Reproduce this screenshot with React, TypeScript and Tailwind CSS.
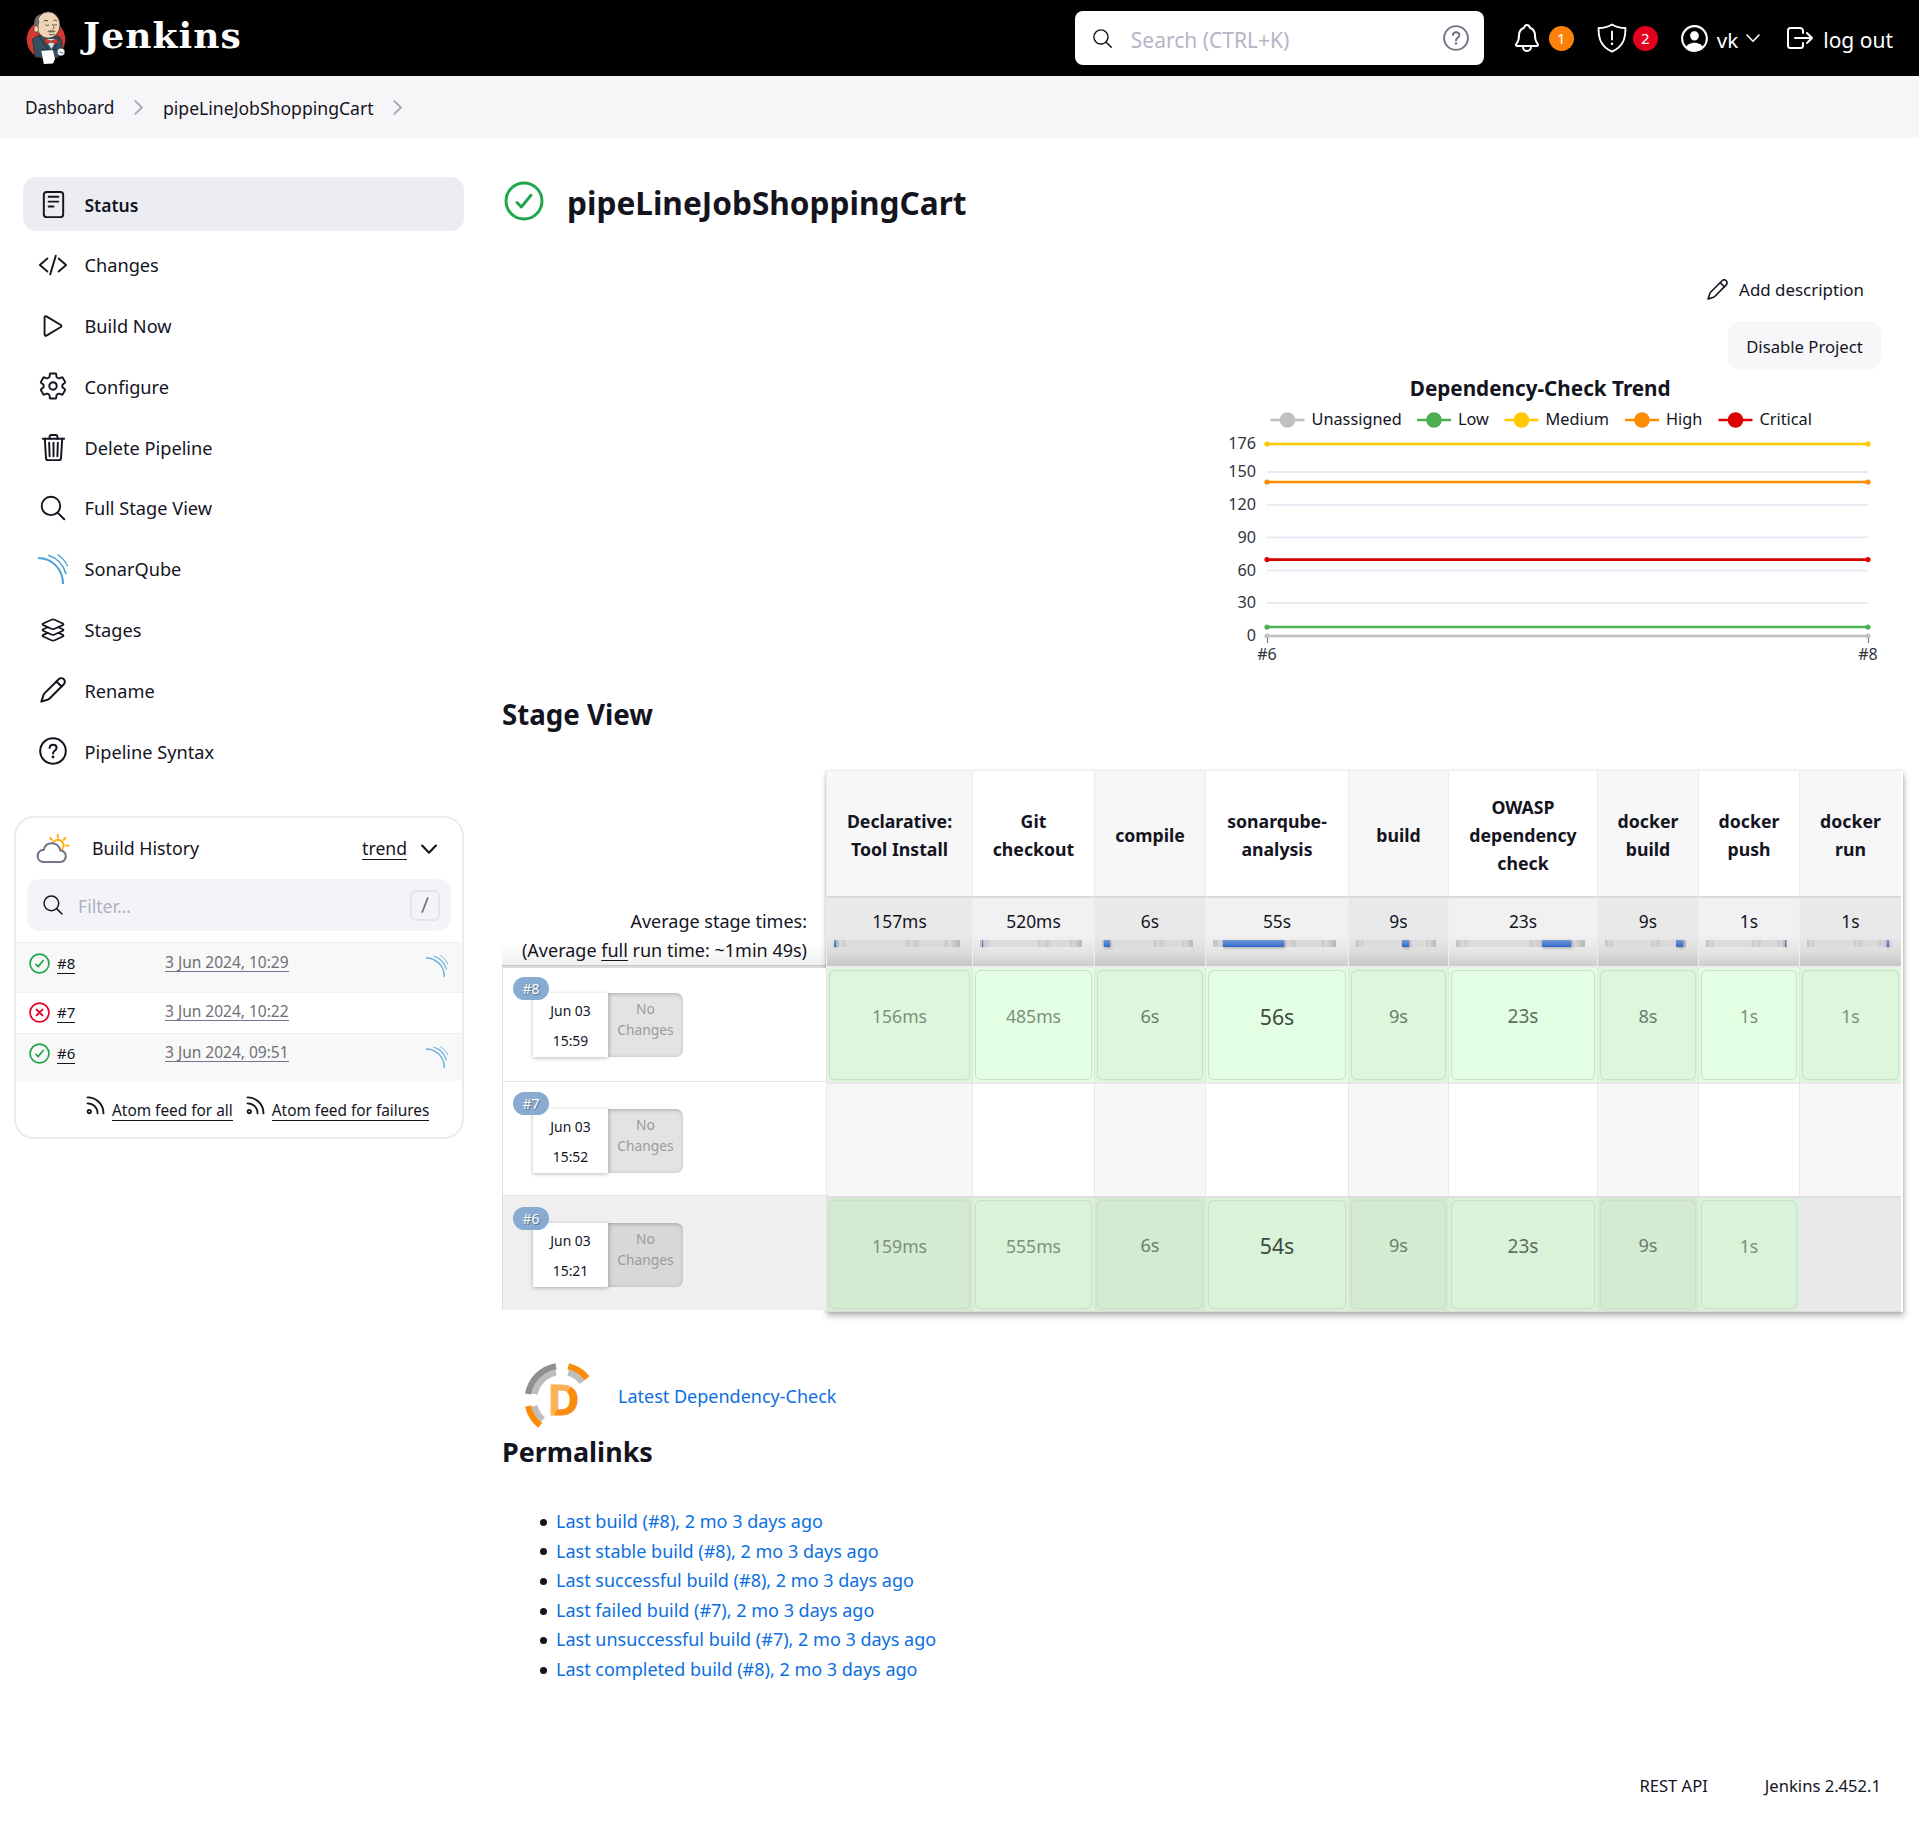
import React from "react";
import {
  IoReaderOutline,
  IoCodeSlashOutline,
  IoPlayOutline,
  IoSettingsOutline,
  IoTrashOutline,
  IoSearchOutline,
  IoLayersOutline,
  IoNotificationsOutline,
  IoPersonCircleOutline,
  IoLogOutOutline,
} from "react-icons/io5";

/* ---------- icons ---------- */

function Butler() {
  return (
    <svg width="40" height="54" viewBox="0 0 40 54" className="shrink-0">
      <circle cx="20" cy="28.5" r="19.3" fill="#d33833" />
      <path d="M6.5 28 L13 24.5 L32 25 L35.5 29 L37 42 L31 47 L9 46 Z" fill="#335061" stroke="#1d2f3a" strokeWidth="0.8" />
      <path d="M19 28 L25.5 38 L31 28 Z" fill="#d5dde3" />
      <path d="M13 25 L23 40 M33 26 L28 40" stroke="#1d2f3a" strokeWidth="0.9" fill="none" />
      <ellipse cx="22.2" cy="14" rx="11.8" ry="13.2" fill="#efd4b7" stroke="#3a2c22" strokeWidth="0.8" />
      <path d="M16 2.4 C10 4 7.8 8 8 15 L12 19 C13 16 12 13 13.5 11 C12 8 13 4.5 16 2.4 Z" fill="#6d6b6d" />
      <ellipse cx="10.2" cy="18" rx="2.3" ry="3.2" fill="#efd4b7" stroke="#3a2c22" strokeWidth="0.6" />
      <path d="M17.5 10.5 C19 9 21 9 22 10.3 M27.5 9.5 C28.5 8.8 30 9 31 10.3" stroke="#3a2c22" strokeWidth="0.9" fill="none" />
      <path d="M19.5 13.8 C21 14.8 22 14.6 23 13.6 M28 13.4 C29 14.3 30.2 14.2 31 13.2" stroke="#3a2c22" strokeWidth="0.8" fill="none" />
      <path d="M26.5 13 C27.5 15.5 29 17 26.8 18" stroke="#3a2c22" strokeWidth="0.8" fill="none" />
      <path d="M21 20.5 C24 18.6 28 18.8 30 20.4 C27 21.6 24 22 21 20.5 Z" fill="#7b6b60" />
      <path d="M23 23.2 C25 24 27 24 28.5 23" stroke="#3a2c22" strokeWidth="0.8" fill="none" />
      <path d="M18.5 27.5 L25 30 L31.5 27.5 L31.8 33 L25 31.2 L19.2 33.2 Z" fill="#d33833" stroke="#7b1d1a" strokeWidth="0.5" />
      <circle cx="35" cy="41" r="3.8" fill="#ffffff" stroke="#1d2f3a" strokeWidth="0.5" />
      <path d="M33 41.5 h4 M34 39.5 l2.5 3.5" stroke="#55626b" strokeWidth="0.6" />
      <path d="M15.3 39.5 L26.8 38.8 L29 48 L27 52.6 L17.8 53 Z" fill="#ffffff" />
      <path d="M15 39.2 L31 38.4" stroke="#1d2f3a" strokeWidth="0.9" />
    </svg>
  );
}

function Pencil({ size }: { size: number }) {
  return (
    <svg width={size} height={size} viewBox="0 0 25 25" fill="none" stroke="currentColor" strokeWidth="1.9" strokeLinejoin="round" strokeLinecap="round">
      <path d="M1.3 23.7 L3.4 17.2 C3.7 16.5 4 16 4.5 15.5 L18 2.1 a3.4 3.4 0 0 1 4.9 4.9 L9.5 20.5 C9 21 8.5 21.3 7.8 21.6 Z" />
      <path d="M15.8 4.3 L20.7 9.2" />
    </svg>
  );
}

function HelpCircle({ size, stroke }: { size: number; stroke: number }) {
  return (
    <svg width={size} height={size} viewBox="0 0 28 28" fill="none" stroke="currentColor" strokeWidth={stroke} strokeLinecap="round" strokeLinejoin="round">
      <circle cx="14" cy="14" r="12.8" />
      <path d="M10.6 10.8 C10.8 8.8 12.2 7.8 14.1 7.8 C16.2 7.8 17.6 9 17.6 10.8 C17.6 12.3 16.8 13 15.7 13.8 C14.6 14.6 14 15.1 14 16.6" />
      <circle cx="14" cy="20" r="1.4" fill="currentColor" stroke="none" />
    </svg>
  );
}

function Sonar({ size, faded }: { size: number; faded?: boolean }) {
  return (
    <svg width={size} height={size} viewBox="0 0 30 30" fill="none" stroke="#4b9fd5" className={faded ? "opacity-80" : ""}>
      <path d="M0 4 C14 4 25 15 25 30" strokeWidth="2" />
      <path d="M10.2 1.3 C19 4 25.5 11 28 20" strokeWidth="1.6" />
      <path d="M19.5 0.5 C24 3.5 27.5 7.5 29.7 12.3" strokeWidth="1.3" />
    </svg>
  );
}

function Shield() {
  return (
    <svg width="30" height="30" viewBox="0 0 30 30" fill="none" stroke="currentColor" strokeWidth="1.9" strokeLinecap="round" strokeLinejoin="round">
      <path d="M15 1.5 C11.5 3.8 6.5 5 1.6 5 C1.4 15.5 3.8 23.5 15 28.6 C26.2 23.5 28.6 15.5 28.4 5 C23.5 5 18.5 3.8 15 1.5 Z" />
      <path d="M15 8.5 V16.5" />
      <circle cx="15" cy="20.8" r="1.3" fill="currentColor" stroke="none" />
    </svg>
  );
}

function Chevron({ dir, className, size = 14, stroke = 1.8 }: { dir: "right" | "down"; className?: string; size?: number; stroke?: number }) {
  return (
    <svg width={size} height={size} viewBox="0 0 14 14" fill="none" stroke="currentColor" strokeWidth={stroke} strokeLinecap="round" strokeLinejoin="round" className={className}>
      {dir === "right" ? <path d="M4 1 L10.2 7 L4 13" /> : <path d="M1 4 L7 10.2 L13 4" />}
    </svg>
  );
}

function StatusMark({ ok, size, stroke }: { ok: boolean; size: number; stroke: number }) {
  return (
    <svg width={size} height={size} viewBox="0 0 40 40" fill="none" stroke={ok ? "#1ea64b" : "#e6001f"} strokeWidth={stroke} strokeLinecap="round" strokeLinejoin="round" className="shrink-0">
      <circle cx="20" cy="20" r="18" />
      {ok ? <path d="M13 21.5 L17.3 26 L27 14.3" /> : <path d="M14.5 14.5 L25.5 25.5 M25.5 14.5 L14.5 25.5" strokeWidth={stroke * 1.2} />}
    </svg>
  );
}

function PartlySunny() {
  return (
    <svg width="34" height="30" viewBox="0 0 34 30" fill="none" strokeWidth="2.1" strokeLinecap="round" strokeLinejoin="round">
      <g stroke="#ffb21b">
        <path d="M17 8.3 A5.8 5.8 0 1 1 26.5 15" />
        <path d="M21.8 1 V3.4 M14.2 4 L15.8 5.7 M29.4 4 L27.7 5.7 M29.9 11.5 H32.4" />
      </g>
      <path d="M6.6 28 H23.6 A5.8 5.8 0 0 0 24.4 16.4 C23.2 11.8 19.5 9.2 15.6 9.2 C11.4 9.2 8.6 12 7.6 15.9 A6.1 6.1 0 0 0 6.6 28 Z" stroke="#73738c" />
    </svg>
  );
}

function Rss() {
  return (
    <svg width="19" height="19" viewBox="0 0 19 19" fill="none" stroke="currentColor" strokeWidth="1.8" strokeLinecap="round">
      <circle cx="3.3" cy="15.6" r="1.7" />
      <path d="M1.5 7.3 C7.2 7.3 11.6 11.6 11.6 17.4" />
      <path d="M1.5 1.4 C10.5 1.4 17.5 8.3 17.5 17.4" />
    </svg>
  );
}

function DependencyLogo() {
  return (
    <svg width="66" height="66" viewBox="0 0 66 66" fill="none" className="shrink-0">
      <defs>
        <linearGradient id="d" x1="0" y1="0" x2="1" y2="1">
          <stop offset="0.5" stopColor="#fab157" />
          <stop offset="0.5" stopColor="#f98c0d" />
        </linearGradient>
      </defs>
      <path d="M3.2 31 A34 34 0 0 1 31 3.3" stroke="#8f8f90" strokeWidth="6.4" />
      <path d="M9.5 31 A28 28 0 0 1 31 9.5" stroke="#bdbdbd" strokeWidth="6.2" />
      <path d="M43.3 3.4 A34 34 0 0 1 62 15.2" stroke="#f98c0d" strokeWidth="6.4" />
      <path d="M43.3 9.7 A28 28 0 0 1 57.2 19.2" stroke="#bdbdbd" strokeWidth="6" />
      <path d="M3.2 43 A34 34 0 0 0 15.2 62.3" stroke="#f98c0d" strokeWidth="6.4" />
      <path d="M9.5 43 A28 28 0 0 0 18 56.6" stroke="#bdbdbd" strokeWidth="6" />
      <text x="22.5" y="52" fontSize="41" fontWeight="700" textLength="32" lengthAdjust="spacingAndGlyphs" fill="url(#d)" stroke="url(#d)" strokeWidth="0.8" className="font-['Noto_Sans']">D</text>
    </svg>
  );
}

/* ---------- header ---------- */

function Header() {
  return (
    <header className="flex h-[76px] items-center bg-black pr-[26px] pl-[26px] text-white">
      <Butler />
      <span className="ml-[17px] pb-[6px] font-['DejaVu_Serif',serif] text-[36px] leading-[44px] font-bold tracking-[1.1px]">Jenkins</span>
      <div className="ml-auto flex h-[54px] w-[409px] items-center rounded-[8px] bg-white pr-[15px] pl-[16px]">
        <IoSearchOutline size={23} className="text-[#14141f]" />
        <span className="ml-[17px] flex-1 pt-[3px] text-[21px] leading-[28px] text-[#b5b5c8]">Search (CTRL+K)</span>
        <span className="text-[#73738c]">
          <HelpCircle size={26} stroke={2.1} />
        </span>
      </div>
      <div className="ml-[27px] flex items-center">
        <IoNotificationsOutline size={32} />
        <span className="ml-[6px] flex h-[25px] w-[25px] items-center justify-center rounded-full bg-[#fe820a] pt-px text-[15px]">1</span>
        <span className="ml-[23px]"><Shield /></span>
        <span className="ml-[6px] flex h-[25px] w-[25px] items-center justify-center rounded-full bg-[#e6001f] pt-px text-[15px]">2</span>
        <IoPersonCircleOutline size={33} className="ml-[20px]" />
        <span className="ml-[6px] pt-[4px] text-[20.6px] leading-[28px]">vk</span>
        <Chevron dir="down" size={14} stroke={1.6} className="ml-[8px]" />
        <IoLogOutOutline size={32} className="ml-[24px]" />
        <span className="ml-[7px] pt-[4px] text-[21px] leading-[28px]">log out</span>
      </div>
    </header>
  );
}

/* ---------- sidebar ---------- */

const NAV: { label: string; icon: React.ReactNode; active?: boolean }[] = [
  { label: "Status", icon: <IoReaderOutline size={31} className="stroke-[18px]" />, active: true },
  { label: "Changes", icon: <IoCodeSlashOutline size={30} /> },
  { label: "Build Now", icon: <IoPlayOutline size={30} /> },
  { label: "Configure", icon: <IoSettingsOutline size={30} /> },
  { label: "Delete Pipeline", icon: <IoTrashOutline size={31} /> },
  { label: "Full Stage View", icon: <IoSearchOutline size={30} /> },
  { label: "SonarQube", icon: <Sonar size={30} /> },
  { label: "Stages", icon: <IoLayersOutline size={28} /> },
  { label: "Rename", icon: <Pencil size={26} /> },
  { label: "Pipeline Syntax", icon: <HelpCircle size={28} stroke={2} /> },
];

function BuildRow({ id, date, ok, sonar, className, inner }: { id: string; date: string; ok: boolean; sonar: boolean; className: string; inner: string }) {
  return (
    <div className={"flex items-start border-t border-[#f0f0f0] pl-[13px] " + className}>
      <div className={"flex items-center " + inner}>
        <span className="pt-[2px]"><StatusMark ok={ok} size={21} stroke={3.2} /></span>
        <span className="ml-[7px] w-[108px] text-[15px] leading-[22px]">
          <a className="border-b border-[#14141f] pb-0">{id}</a>
        </span>
        <a className="border-b border-[#73738c] text-[15.5px] leading-[18px] text-[#6f6f75]">{date}</a>
      </div>
      {sonar && (
        <span className="mt-[12px] mr-[14px] ml-auto">
          <Sonar size={22} faded />
        </span>
      )}
    </div>
  );
}

function Sidebar() {
  return (
    <aside className="w-[502px] shrink-0 pt-[38px]">
      <nav className="ml-[23px] flex w-[441px] flex-col gap-[6.8px]">
        {NAV.map((n) => (
          <a key={n.label} className={"flex h-[54px] items-center rounded-[13px] pl-[14px] " + (n.active ? "bg-[#ecedf3] font-semibold" : "")}>
            <span className="flex w-[32px] justify-center">{n.icon}</span>
            <span className={"ml-[15.5px] pt-[1px] leading-[24px] " + (n.active ? "text-[17.5px]" : "text-[18.2px]")}>{n.label}</span>
          </a>
        ))}
      </nav>

      <section className="mt-[38px] ml-[14px] h-[323px] w-[450px] overflow-hidden rounded-[20px] border-2 border-[#ebebf3]">
        <div className="flex h-[61px] items-center pr-[25px] pl-[20px]">
          <PartlySunny />
          <span className="ml-[22px] pb-px text-[17.8px] leading-[24px]">Build History</span>
          <a className="ml-auto border-b border-[#14141f] text-[17.6px] leading-[21px]">trend</a>
          <Chevron dir="down" size={16} stroke={1.9} className="ml-[14px]" />
        </div>
        <div className="mx-[11px] flex h-[52px] items-center rounded-[13px] bg-[#f3f3f8] pr-[11px] pl-[14px]">
          <IoSearchOutline size={24} />
          <span className="ml-[13px] flex-1 pt-[3px] text-[17.6px] text-[#b0b0c2]">Filter...</span>
          <span className="flex h-[31px] w-[30px] items-center justify-center rounded-[6px] border-2 border-[#e4e4ee]">
            <svg width="8" height="16" viewBox="0 0 8 16" stroke="#73738c" strokeWidth="1.8" strokeLinecap="round">
              <path d="M6.7 1 L1.3 15" />
            </svg>
          </span>
        </div>
        <div className="mt-[11px]">
          <BuildRow id="#8" date="3 Jun 2024, 10:29" ok sonar className="h-[50px] bg-[#f8f8f8]" inner="h-[39px]" />
          <BuildRow id="#7" date="3 Jun 2024, 10:22" ok={false} sonar={false} className="h-[41px]" inner="h-[37px]" />
          <BuildRow id="#6" date="3 Jun 2024, 09:51" ok sonar className="h-[48px] bg-[#f8f8f8]" inner="h-[37px]" />
        </div>
        <div className="flex h-[56px] items-center pt-[4px] pl-[70px] text-[15.4px]">
          <span className="pb-[11px]"><Rss /></span>
          <a className="ml-[7px] border-b border-[#14141f] leading-[18px]">Atom feed for all</a>
          <span className="ml-[13px] pb-[11px]"><Rss /></span>
          <a className="ml-[7px] border-b border-[#14141f] leading-[18px]">Atom feed for failures</a>
        </div>
      </section>
    </aside>
  );
}

/* ---------- trend chart ---------- */

const AXIS: [string, number][] = [["176", 69], ["150", 97], ["120", 130], ["90", 162.5], ["60", 195.5], ["30", 228], ["0", 261]];
const LEGEND: [string, number, string][] = [
  ["Unassigned", 70.5, "#c0c0c0"],
  ["Low", 217, "#4caf50"],
  ["Medium", 304.5, "#ffc800"],
  ["High", 425, "#ff8c00"],
  ["Critical", 518.5, "#dc0000"],
];
const SERIES: [number, string][] = [[261, "#c0c0c0"], [252, "#4caf50"], [69, "#ffc800"], [107, "#ff8c00"], [184.6, "#dc0000"]];

function TrendChart() {
  return (
    <svg width="700" height="300" viewBox="0 0 700 300" className="mt-[5px] mr-[19px] self-end font-['Noto_Sans'] text-[16px]">
      <text x="340.2" y="21" textAnchor="middle" fontSize="20.7" fontWeight="700" fill="#14141f">Dependency-Check Trend</text>
      {LEGEND.map(([label, x, color]) => (
        <g key={label}>
          <path d={`M${x} 45 h34`} stroke={color} strokeWidth="2.5" />
          <circle cx={x + 17} cy="45" r="7.8" fill={color} />
          <text x={x + 41} y="50" fontSize="16.3" fill="#14141f">{label}</text>
        </g>
      ))}
      {AXIS.map(([label, y]) => (
        <g key={label}>
          <path d={`M67 ${y} H668`} stroke="#e6ebf4" strokeWidth="1.8" />
          <text x="56" y={y + 5} textAnchor="end" fontSize="16.2" fill="#33333d">{label}</text>
        </g>
      ))}
      <path d="M67.5 261 v7 M668.5 261 v7" stroke="#6e7079" strokeWidth="1" />
      {SERIES.map(([y, color]) => (
        <g key={color} stroke={color} fill={color}>
          <path d={`M67 ${y} H668`} strokeWidth="2.6" />
          <circle cx="67" cy={y} r="2.6" stroke="none" />
          <circle cx="668" cy={y} r="2.6" stroke="none" />
        </g>
      ))}
      <text x="67" y="285" textAnchor="middle" fill="#33333d">#6</text>
      <text x="668" y="285" textAnchor="middle" fill="#33333d">#8</text>
    </svg>
  );
}

/* ---------- stage view ---------- */

type Stage = { lines: string[]; avg: string; start: number; width: number; r8: string; r6: string; size: string };

const SMALL = "text-[17.6px] text-[#7e8f7e]";
const MID = "text-[18.2px] text-[#6b7d6c]";
const STAGES: Stage[] = [
  { lines: ["Declarative:", "Tool Install"], avg: "157ms", start: 0, width: 1.2, r8: "156ms", r6: "159ms", size: SMALL },
  { lines: ["Git", "checkout"], avg: "520ms", start: 1.8, width: 1.4, r8: "485ms", r6: "555ms", size: SMALL },
  { lines: ["compile"], avg: "6s", start: 2, width: 6.5, r8: "6s", r6: "6s", size: MID },
  { lines: ["sonarqube-", "analysis"], avg: "55s", start: 8, width: 50, r8: "56s", r6: "54s", size: "text-[21.3px] text-[#414943]" },
  { lines: ["build"], avg: "9s", start: 57, width: 9, r8: "9s", r6: "9s", size: MID },
  { lines: ["OWASP", "dependency", "check"], avg: "23s", start: 67, width: 22, r8: "23s", r6: "23s", size: "text-[19.1px] text-[#5f6f60]" },
  { lines: ["docker", "build"], avg: "9s", start: 88, width: 8.5, r8: "8s", r6: "9s", size: MID },
  { lines: ["docker", "push"], avg: "1s", start: 97.3, width: 2, r8: "1s", r6: "1s", size: SMALL },
  { lines: ["docker", "run"], avg: "1s", start: 97.8, width: 2.2, r8: "1s", r6: "", size: SMALL },
];

const COLS = "grid grid-cols-[146px_122px_111px_143px_100px_149px_101px_101px_102px]";

function StageCell({ text, size, odd, dark }: { text: string; size: string; odd: boolean; dark: boolean }) {
  if (!text) {
    return <div className={"border-l border-[#e8e8e8] " + (dark ? "bg-[#e9e9e9]" : odd ? "bg-[#f7f7f7]" : "bg-white")} />;
  }
  const bg = dark ? (odd ? "bg-[#d2ebd1]" : "bg-[#d9f3d9]") : odd ? "bg-[#ddf7dc]" : "bg-[#e3ffe3]";
  return (
    <div className={"border-l border-[#e2e6e2] px-[2px] pt-[2px] pb-[2px] " + bg}>
      <div className={"flex h-full items-center justify-center rounded-[6px] border border-[#d0dccf] pb-[17px] shadow-[0_0_1px_rgba(0,0,0,0.12)] " + size}>{text}</div>
    </div>
  );
}

function RunInfo({ id, time, dark, className, badge }: { id: string; time: string; dark: boolean; className: string; badge: string }) {
  return (
    <div className={"relative border-l border-l-[#dedede] pl-[30px] " + className + (dark ? " bg-[#efefef]" : " bg-white")}>
      <span className={"absolute left-[10px] z-10 flex h-[23px] w-[36px] items-center justify-center rounded-full bg-[#88abd1] text-[14px] text-white [text-shadow:1px_1px_1px_rgba(0,0,0,0.35)] " + badge}>{id}</span>
      <div className="flex h-[64px] w-[150px]">
        <div className="flex w-[75px] flex-col items-center bg-white pt-[3px] text-[13.9px] leading-[30px] shadow-[0_1px_4px_rgba(0,0,0,0.28)]">
          <span>Jun 03</span>
          <span>{time}</span>
        </div>
        <div className={"w-[75px] rounded-r-[7px] pt-[5px] text-center text-[13.8px] leading-[21px] text-[#9b9b9b] shadow-[inset_1px_1px_4px_rgba(0,0,0,0.25)] " + (dark ? "bg-[#d8d8d8]" : "bg-[#e3e3e3]")}>
          No
          <br />
          Changes
        </div>
      </div>
    </div>
  );
}

function StageView() {
  return (
    <div className="mt-[38px] flex w-[1401px]">
      <div className="w-[324px] shrink-0 pt-[125px]">
        <div className="flex h-[69px] flex-col justify-end bg-[linear-gradient(to_bottom,#ffffff_70%,#f0f0f0)] pr-[19px] text-right text-[18px] leading-[29px]">
          <span>Average stage times:</span>
          <span>
            (Average <span className="underline decoration-1 underline-offset-[3px]">full</span> run time: ~1min 49s)
          </span>
        </div>
        <div className="h-[3px] border-t border-[#c6c6c6] bg-[#dcdcdc]" />
        <RunInfo id="#8" time="15:59" dark={false} className="h-[113px] pt-[25px]" badge="top-[9px]" />
        <RunInfo id="#7" time="15:52" dark={false} className="h-[114px] border-t border-t-[#e2e2e2] pt-[27px]" badge="top-[10px]" />
        <RunInfo id="#6" time="15:21" dark className="h-[115px] border-t border-t-[#e2e2e2] pt-[27px]" badge="top-[11px]" />
      </div>

      <div className="h-[541px] w-[1077px] border-r-2 border-white shadow-[1px_4px_6px_rgba(0,0,0,0.28),0_0_3px_rgba(0,0,0,0.15)]">
        <div className={COLS + " h-[125px]"}>
          {STAGES.map((s, i) => (
            <div key={i} className={"flex flex-col items-center justify-center border-l border-[#ececec] pt-[2px] text-[17.7px] leading-[28px] font-bold " + (i % 2 ? "bg-white" : "bg-[#f7f7f7]")}>
              {s.lines.map((l) => (
                <span key={l}>{l}</span>
              ))}
            </div>
          ))}
        </div>
        <div className={COLS + " h-[70px]"}>
          {STAGES.map((s, i) => (
            <div
              key={i}
              className={
                "border-t-2 border-l border-t-[#dadada] border-l-[#ededed] pt-[8px] pr-[12px] pl-[7px] text-center text-[17.4px] leading-[30px] " +
                (i % 2 ? "bg-[linear-gradient(to_bottom,#f1f1f1_55%,#e4e4e4_80%,#cdcdcd)]" : "bg-[linear-gradient(to_bottom,#e9e9e9_55%,#dcdcdc_80%,#c6c6c6)]")
              }
            >
              <div className="-mr-[5px]">{s.avg}</div>
              <div className="mt-[4px] flex h-[7px] bg-[linear-gradient(to_right,#c4c4c4,#c9c9c9_3%,#dadada_5%,#cbcbcb_8%,#dcdcdc_10%,#dcdcdc_56%,#cacaca_58%,#d8d8d8_61%,#cacaca_66%,#dadada_69%,#dadada_87%,#c9c9c9_89%,#d8d8d8_92%,#bcbcbc_98%)]">
                <div className="h-[7px] bg-[linear-gradient(to_bottom,#6f9ad6,#3467cf)] shadow-[1px_1px_3px_rgba(0,0,0,0.3)]" style={{ marginLeft: `${s.start}%`, width: `${s.width}%` }} />
              </div>
            </div>
          ))}
        </div>
        <div className="h-[2px] bg-[#ececec]" />
        <div className={COLS + " h-[114px]"}>
          {STAGES.map((s, i) => (
            <StageCell key={i} text={s.r8} size={s.size} odd={i % 2 === 0} dark={false} />
          ))}
        </div>
        <div className="h-[2px] bg-[#e9e9e9]" />
        <div className={COLS + " h-[112px]"}>
          {STAGES.map((s, i) => (
            <StageCell key={i} text="" size="" odd={i % 2 === 0} dark={false} />
          ))}
        </div>
        <div className="h-[2px] bg-[#dfdfdf]" />
        <div className={COLS + " h-[114px] border-b border-[#dcdcdc]"}>
          {STAGES.map((s, i) => (
            <StageCell key={i} text={s.r6} size={s.size} odd={i % 2 === 0} dark />
          ))}
        </div>
      </div>
    </div>
  );
}

/* ---------- page ---------- */

const LINKS = [
  "Last build (#8), 2 mo 3 days ago",
  "Last stable build (#8), 2 mo 3 days ago",
  "Last successful build (#8), 2 mo 3 days ago",
  "Last failed build (#7), 2 mo 3 days ago",
  "Last unsuccessful build (#7), 2 mo 3 days ago",
  "Last completed build (#8), 2 mo 3 days ago",
];

export default function App() {
  return (
    <div className="h-[1827px] w-full overflow-hidden bg-white font-['Noto_Sans','Open_Sans',sans-serif] text-[#14141f]">
      <Header />
      <div className="flex h-[62px] items-center bg-[#f6f6f8] pl-[25px]">
        <span className="w-[89px] pt-[2px] text-[17.3px]">Dashboard</span>
        <Chevron dir="right" size={15} stroke={1.7} className="ml-[17px] text-[#a6a6b8]" />
        <span className="ml-[17px] w-[210px] pt-[2px] text-[17.6px]">pipeLineJobShoppingCart</span>
        <Chevron dir="right" size={15} stroke={1.7} className="ml-[17px] text-[#a6a6b8]" />
      </div>

      <div className="flex pt-px">
        <Sidebar />
        <main className="flex min-w-0 flex-1 flex-col">
          <div className="flex h-[126px] items-start pt-[42px] pl-[2px]">
            <StatusMark ok size={40} stroke={2.9} />
            <h1 className="mt-[2px] ml-[23px] text-[31.6px] leading-[40px] font-bold">pipeLineJobShoppingCart</h1>
          </div>
          <div className="flex h-[49px] items-center self-end pr-[55px]">
            <Pencil size={21} />
            <span className="ml-[11px] text-[16.9px]">Add description</span>
          </div>
          <button className="mt-[7px] mr-[38px] h-[49px] w-[153px] self-end rounded-[13px] bg-[#f7f7f9] pt-[2px] text-[16.7px]">Disable Project</button>
          <TrendChart />

          <h2 className="mt-[22px] text-[27.7px] leading-[35px] font-bold">Stage View</h2>
          <div className="h-px" />
          <StageView />

          <div className="mt-[51px] flex h-[65px] items-center pl-[23px]">
            <DependencyLogo />
            <a className="ml-[27px] pt-[2px] text-[18px] text-[#0b6fe0]">Latest Dependency-Check</a>
          </div>
          <h2 className="mt-[6px] text-[26.9px] leading-[36px] font-bold">Permalinks</h2>
          <ul className="mt-[37px] pl-[38px] text-[18px] leading-[29.6px]">
            {LINKS.map((l) => (
              <li key={l} className="flex items-center">
                <span className="mt-[1px] h-[7px] w-[7px] rounded-full bg-[#14141f]" />
                <a className="ml-[9px] text-[#0b6fe0]">{l}</a>
              </li>
            ))}
          </ul>

          <footer className="mt-[89px] mr-[38px] flex gap-[57px] self-end text-[16.6px] leading-[24px]">
            <span>REST API</span>
            <span>Jenkins 2.452.1</span>
          </footer>
        </main>
      </div>
    </div>
  );
}
